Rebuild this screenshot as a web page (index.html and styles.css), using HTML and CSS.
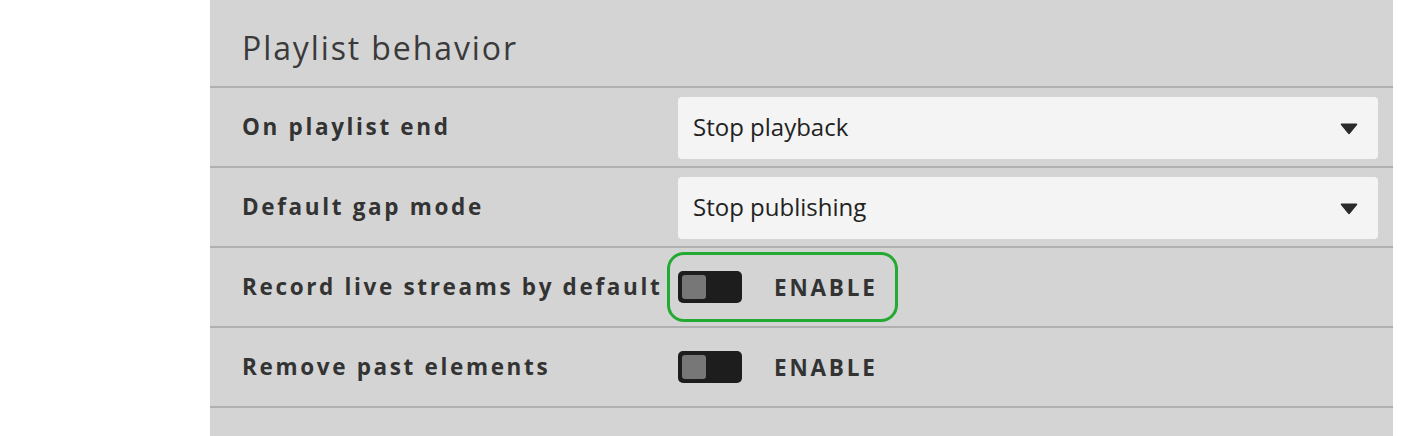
FILE: index.html
```html
<!DOCTYPE html>
<html>
<head>
<meta charset="utf-8">
<link rel="stylesheet" href="styles.css">
</head>
<body>
<div class="page">
  <div class="panel">
    <div class="panel-head">Playlist behavior</div>
    <div class="row">
      <div class="label">On playlist end</div>
      <div class="control">
        <div class="select"><span class="select-text">Stop playback</span><svg class="caret" viewBox="0 0 18 12" width="18" height="12"><path d="M1.5 0.5 H16.5 Q18 0.5 17 2 L10 10.5 Q9 11.8 8 10.5 L1 2 Q0 0.5 1.5 0.5 Z" fill="#2a2a2a"/></svg></div>
      </div>
    </div>
    <div class="row">
      <div class="label">Default gap mode</div>
      <div class="control">
        <div class="select"><span class="select-text">Stop publishing</span><svg class="caret" viewBox="0 0 18 12" width="18" height="12"><path d="M1.5 0.5 H16.5 Q18 0.5 17 2 L10 10.5 Q9 11.8 8 10.5 L1 2 Q0 0.5 1.5 0.5 Z" fill="#2a2a2a"/></svg></div>
      </div>
    </div>
    <div class="row">
      <div class="label">Record live streams by default</div>
      <div class="control">
        <div class="toggle-wrap focused"><span class="toggle"><span class="knob"></span></span><span class="toggle-text">ENABLE</span></div>
      </div>
    </div>
    <div class="row">
      <div class="label">Remove past elements</div>
      <div class="control">
        <div class="toggle-wrap"><span class="toggle"><span class="knob"></span></span><span class="toggle-text">ENABLE</span></div>
      </div>
    </div>
    <div class="panel-foot"></div>
  </div>
</div>
</body>
</html>
```
FILE: styles.css
```css
html, body {
  margin: 0;
  padding: 0;
  background: #ffffff;
  height: 100%;
}
.page {
  display: flex;
  height: 436px;
  padding-left: 210px;
  padding-right: 17px;
  overflow: hidden;
}
.panel {
  flex: 1;
  background: #d4d4d4;
  display: flex;
  flex-direction: column;
  font-family: "Open Sans", sans-serif;
  color: #333333;
}
.panel-head {
  height: 88px;
  flex: none;
  box-sizing: border-box;
  padding-left: 32px;
  padding-top: 8px;
  display: flex;
  align-items: center;
  font-size: 32px;
  letter-spacing: 1.9px;
  color: #3a3a3a;
  border-bottom: 2px solid #b0b0b0;
}
.row {
  height: 80px;
  flex: none;
  box-sizing: border-box;
  border-bottom: 2px solid #b0b0b0;
  display: flex;
  align-items: center;
  padding-left: 32px;
  padding-right: 15px;
}
.label {
  width: 436px;
  flex: none;
  font-weight: 700;
  font-size: 22.5px;
  letter-spacing: 2.65px;
  color: #333333;
  white-space: nowrap;
  padding-bottom: 2px;
}
.control {
  flex: 1;
  display: flex;
  align-items: center;
}
.select {
  flex: 1;
  height: 62px;
  box-sizing: border-box;
  background: #f4f4f4;
  border-radius: 4px;
  display: flex;
  align-items: center;
  justify-content: space-between;
  padding: 0 20px 0 15px;
  font-size: 24px;
  color: #222222;
  margin-top: 2px;
}
.select-text {
  padding-bottom: 4px;
}
.caret {
  display: block;
  margin-top: 2px;
}
.toggle-wrap {
  display: flex;
  align-items: center;
  gap: 32px;
  height: 32px;
  padding: 8px 9px 8px 0;
  border-radius: 6px;
  outline: 3px solid transparent;
  outline-offset: 8px;
}
.toggle-wrap.focused {
  outline-color: #22aa33;
}
.toggle {
  width: 64px;
  height: 32px;
  box-sizing: border-box;
  background: #1d1d1d;
  border-radius: 5px;
  padding: 4px;
  display: flex;
}
.knob {
  width: 24px;
  height: 24px;
  background: #777777;
  border-radius: 3px;
}
.toggle-text {
  font-weight: 700;
  font-size: 22.5px;
  letter-spacing: 2.8px;
  color: #333333;
}
```
